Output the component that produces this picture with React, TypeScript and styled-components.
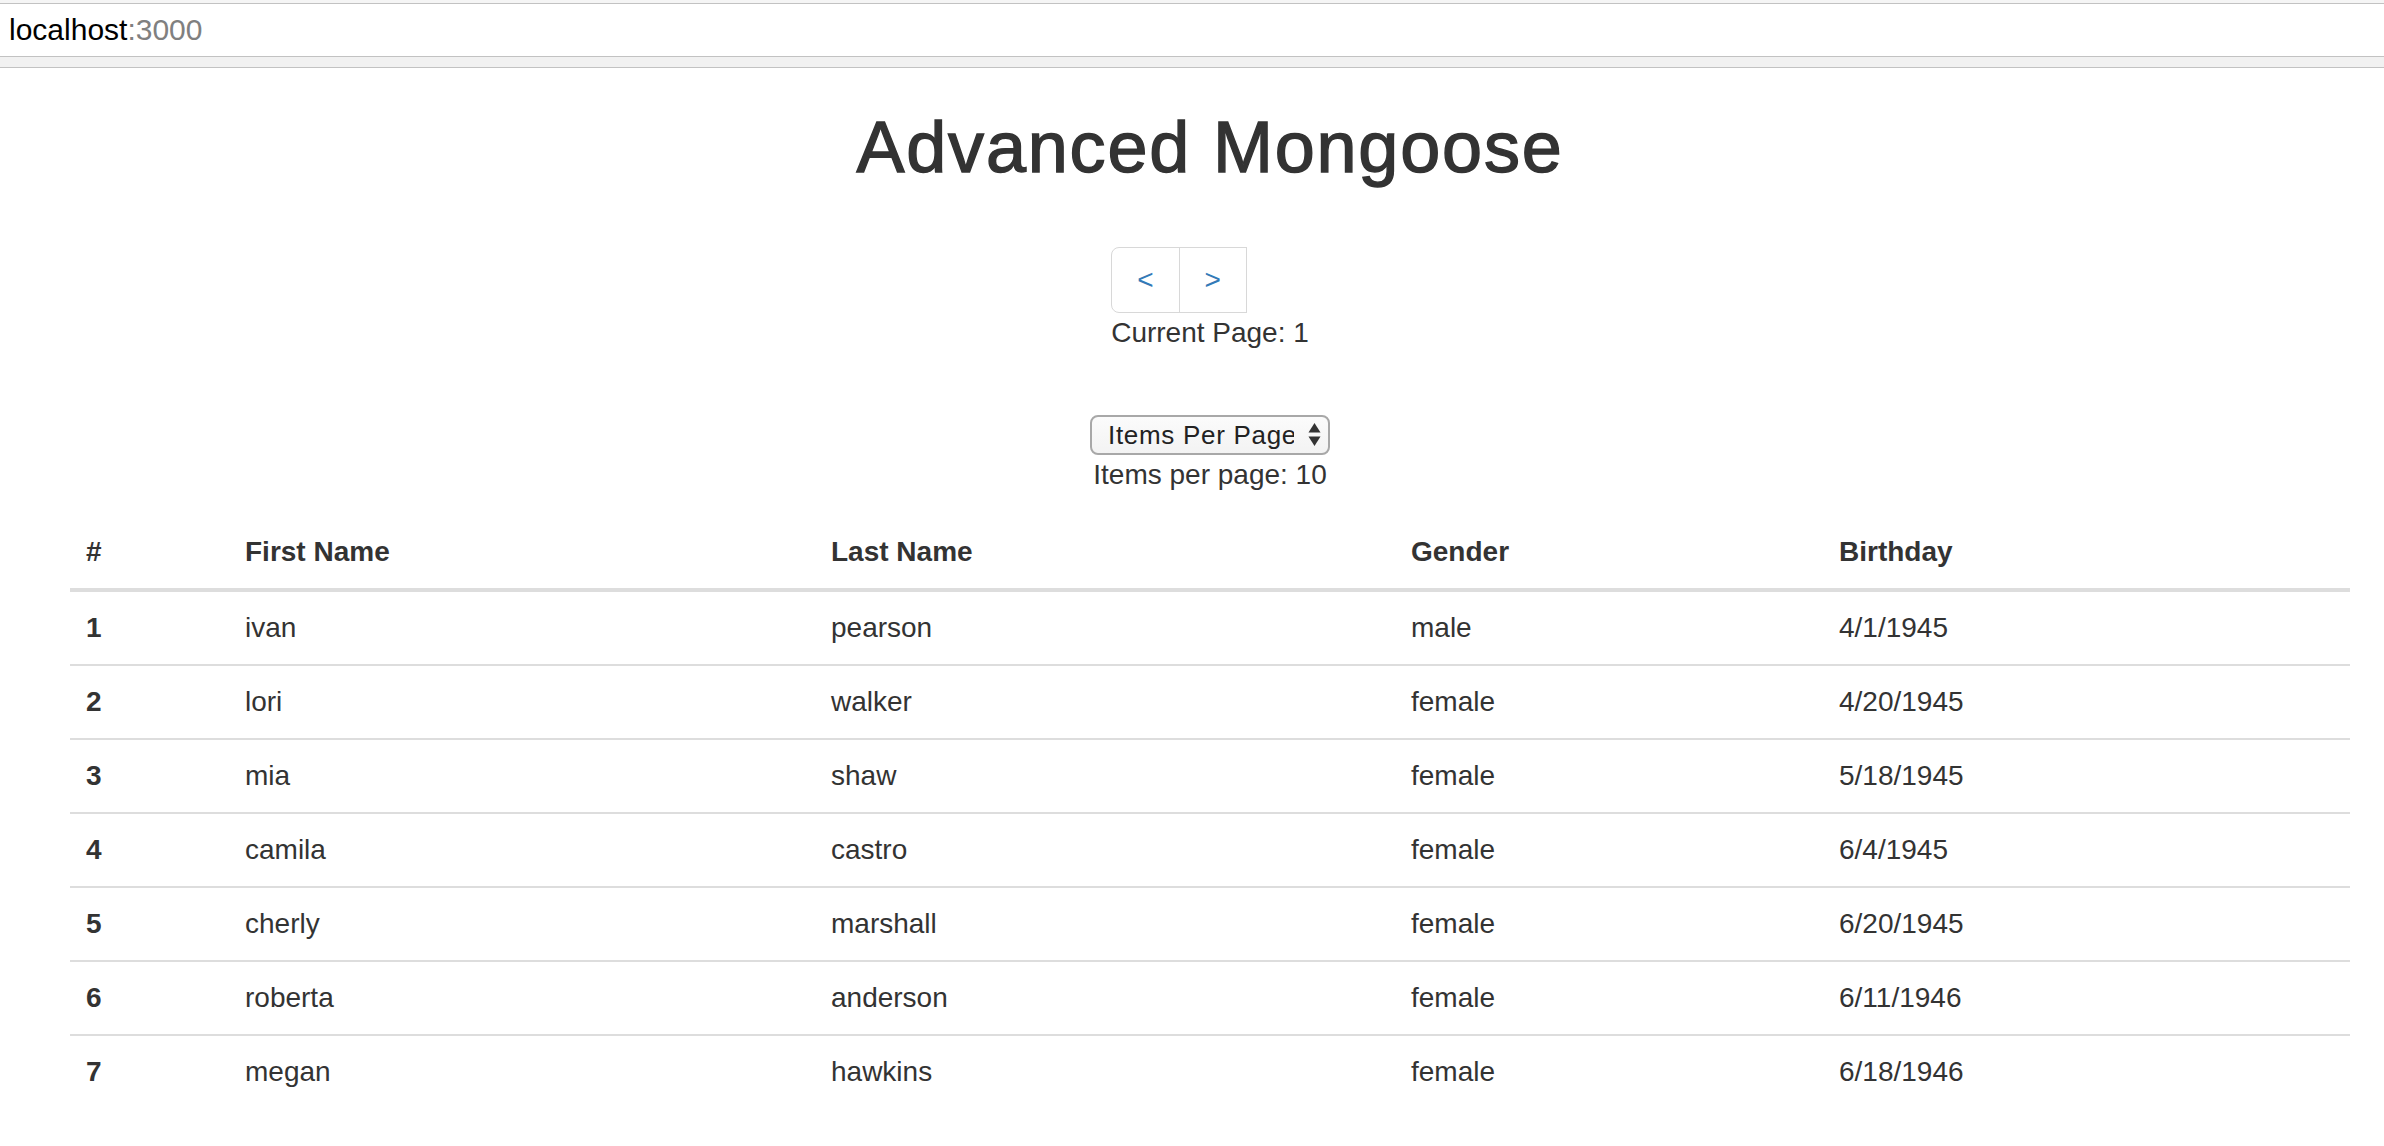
import React from 'react';
import styled, { createGlobalStyle } from 'styled-components';

const GlobalStyle = createGlobalStyle`
  html, body {
    margin: 0;
    padding: 0;
    background: #ffffff;
    overflow: hidden;
  }
  body {
    font-family: "Liberation Sans", Arial, Helvetica, sans-serif;
    color: #333333;
  }
  * { box-sizing: border-box; }
`;

const Chrome = styled.div`
  width: 100%;
  display: flex;
  flex-direction: column;
`;

const ChromeTop = styled.div`
  height: 4px;
  background: #f5f5f5;
  border-bottom: 1px solid #c2c2c2;
`;

const AddressBar = styled.div`
  height: 53px;
  display: flex;
  align-items: center;
  padding-left: 9px;
  background: #ffffff;
  border-bottom: 1px solid #c2c2c2;
  font-size: 30px;
  color: #000000;
`;

const Port = styled.span`
  color: #808080;
`;

const ChromeBand = styled.div`
  height: 11px;
  background: #f1f1f1;
  border-bottom: 1px solid #c2c2c2;
`;

const Viewport = styled.div`
  width: 2420px;
`;

const Container = styled.div`
  width: 2340px;
  margin: 0 auto;
  padding: 0 30px;
  display: flex;
  flex-direction: column;
  align-items: center;
`;

const Title = styled.h1`
  margin: 40px 0 20px;
  font-size: 72px;
  line-height: 79.2px;
  font-weight: 500;
  letter-spacing: 1.8px;
  color: #333333;
  -webkit-text-stroke: 1.4px #333333;
`;

const Pager = styled.div`
  margin-top: 40px;
  display: inline-flex;
  flex-direction: column;
  align-items: flex-start;
`;

const PageButtons = styled.div`
  display: flex;
`;

const PageButton = styled.a<{ $first?: boolean }>`
  display: block;
  padding: 12px 25px;
  line-height: 40px;
  font-size: 28px;
  color: #337ab7;
  text-decoration: none;
  background: #ffffff;
  border: 1px solid #d8d8d8;
  margin-left: ${(p) => (p.$first ? '0' : '-1px')};
  border-radius: ${(p) => (p.$first ? '8px 0 0 8px' : '0')};
  cursor: pointer;
`;

const Line = styled.div`
  font-size: 28px;
  line-height: 40px;
  color: #333333;
  text-align: center;
`;

const SelectBlock = styled.div`
  margin-top: 62px;
  display: flex;
  flex-direction: column;
  align-items: center;
`;

const SelectWrap = styled.div`
  position: relative;
  width: 240px;
  height: 40px;
`;

const Select = styled.select`
  appearance: none;
  -webkit-appearance: none;
  width: 100%;
  height: 100%;
  padding: 0 34px 0 16px;
  font-family: "Liberation Sans", Arial, sans-serif;
  font-size: 26px;
  letter-spacing: 0.7px;
  color: #222222;
  background: linear-gradient(#fbfbfb, #f3f3f3);
  border: 2px solid #a8a8a8;
  border-radius: 8px;
  outline: none;
`;

const Arrows = styled.svg`
  position: absolute;
  right: 9px;
  top: 7px;
  width: 13px;
  height: 25px;
  pointer-events: none;
`;

const Table = styled.table`
  margin-top: 21px;
  width: 2280px;
  border-collapse: separate;
  border-spacing: 0;
  table-layout: fixed;
  font-size: 28px;
  line-height: 40px;
  color: #333333;
`;

const Col = styled.col<{ $w: number }>`
  width: ${(p) => p.$w}px;
`;

const HeadCell = styled.th`
  padding: 16px;
  text-align: left;
  font-weight: bold;
  border-bottom: 4px solid #dddddd;
`;

const BodyRow = styled.tr`
  & + & > * {
    border-top: 2px solid #dddddd;
  }
`;

const Cell = styled.td<{ $bold?: boolean }>`
  padding: 16px;
  text-align: left;
  font-weight: ${(p) => (p.$bold ? 'bold' : 'normal')};
`;

const columns = [
  { label: '#', w: 159 },
  { label: 'First Name', w: 586 },
  { label: 'Last Name', w: 580 },
  { label: 'Gender', w: 428 },
  { label: 'Birthday', w: 527 },
];

const people = [
  ['1', 'ivan', 'pearson', 'male', '4/1/1945'],
  ['2', 'lori', 'walker', 'female', '4/20/1945'],
  ['3', 'mia', 'shaw', 'female', '5/18/1945'],
  ['4', 'camila', 'castro', 'female', '6/4/1945'],
  ['5', 'cherly', 'marshall', 'female', '6/20/1945'],
  ['6', 'roberta', 'anderson', 'female', '6/11/1946'],
  ['7', 'megan', 'hawkins', 'female', '6/18/1946'],
];

export default function App() {
  return (
    <>
      <GlobalStyle />
      <Chrome>
        <ChromeTop />
        <AddressBar>
          localhost<Port>:3000</Port>
        </AddressBar>
        <ChromeBand />
      </Chrome>
      <Viewport>
        <Container>
          <Title>Advanced Mongoose</Title>
          <Pager>
            <PageButtons>
              <PageButton $first>&lt;</PageButton>
              <PageButton>&gt;</PageButton>
            </PageButtons>
            <Line>Current Page: 1</Line>
          </Pager>
          <SelectBlock>
            <SelectWrap>
              <Select defaultValue="">
                <option value="">Items Per Page</option>
                <option value="5">5</option>
                <option value="10">10</option>
                <option value="20">20</option>
              </Select>
              <Arrows viewBox="0 0 13 25">
                <path d="M6.5 1 L12.5 10.5 L0.5 10.5 Z" fill="#333" />
                <path d="M6.5 24 L12.5 14.5 L0.5 14.5 Z" fill="#333" />
              </Arrows>
            </SelectWrap>
            <Line>Items per page: 10</Line>
          </SelectBlock>
          <Table>
            <colgroup>
              {columns.map((c) => (
                <Col key={c.label} $w={c.w} />
              ))}
            </colgroup>
            <thead>
              <tr>
                {columns.map((c) => (
                  <HeadCell key={c.label}>{c.label}</HeadCell>
                ))}
              </tr>
            </thead>
            <tbody>
              {people.map((row) => (
                <BodyRow key={row[0]}>
                  {row.map((v, i) => (
                    <Cell key={i} $bold={i === 0}>
                      {v}
                    </Cell>
                  ))}
                </BodyRow>
              ))}
            </tbody>
          </Table>
        </Container>
      </Viewport>
    </>
  );
}
